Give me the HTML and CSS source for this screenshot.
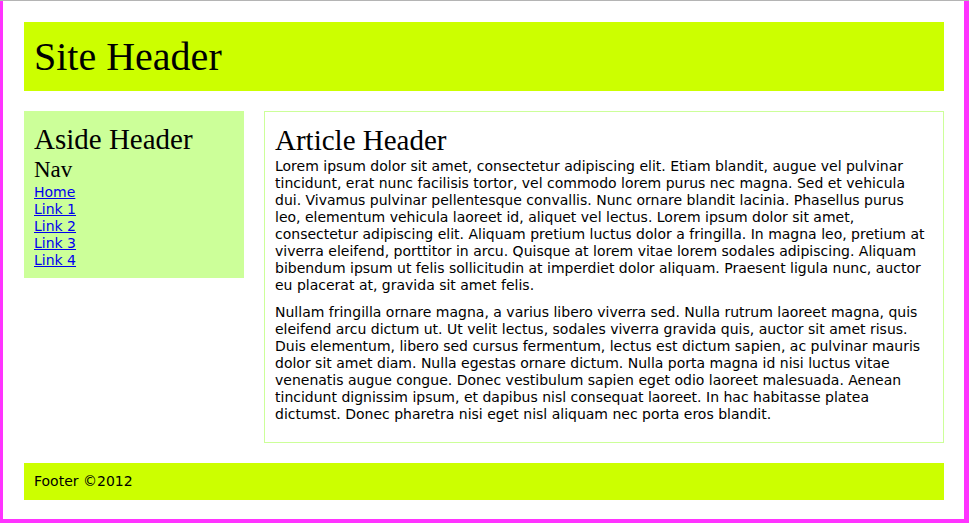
FILE: index.html
```html
<!DOCTYPE html>
<html>
<head>
<meta charset="utf-8">
<title>Layout</title>
<link rel="stylesheet" href="styles.css">
</head>
<body>
<div class="page">
  <header class="site-header">
    <h1>Site Header</h1>
  </header>
  <div class="main">
    <aside class="aside">
      <h2 class="aside-title">Aside Header</h2>
      <nav class="nav">
        <h3 class="nav-title">Nav</h3>
        <ul class="nav-list">
          <li><a href="#">Home</a></li>
          <li><a href="#">Link 1</a></li>
          <li><a href="#">Link 2</a></li>
          <li><a href="#">Link 3</a></li>
          <li><a href="#">Link 4</a></li>
        </ul>
      </nav>
    </aside>
    <article class="article">
      <h2 class="article-title">Article Header</h2>
      <p>Lorem ipsum dolor sit amet, consectetur adipiscing elit. Etiam blandit, augue vel pulvinar tincidunt, erat nunc facilisis tortor, vel commodo lorem purus nec magna. Sed et vehicula dui. Vivamus pulvinar pellentesque convallis. Nunc ornare blandit lacinia. Phasellus purus leo, elementum vehicula laoreet id, aliquet vel lectus. Lorem ipsum dolor sit amet, consectetur adipiscing elit. Aliquam pretium luctus dolor a fringilla. In magna leo, pretium at viverra eleifend, porttitor in arcu. Quisque at lorem vitae lorem sodales adipiscing. Aliquam bibendum ipsum ut felis sollicitudin at imperdiet dolor aliquam. Praesent ligula nunc, auctor eu placerat at, gravida sit amet felis.</p>
      <p>Nullam fringilla ornare magna, a varius libero viverra sed. Nulla rutrum laoreet magna, quis eleifend arcu dictum ut. Ut velit lectus, sodales viverra gravida quis, auctor sit amet risus. Duis elementum, libero sed cursus fermentum, lectus est dictum sapien, ac pulvinar mauris dolor sit amet diam. Nulla egestas ornare dictum. Nulla porta magna id nisi luctus vitae venenatis augue congue. Donec vestibulum sapien eget odio laoreet malesuada. Aenean tincidunt dignissim ipsum, et dapibus nisl consequat laoreet. In hac habitasse platea dictumst. Donec pharetra nisi eget nisl aliquam nec porta eros blandit.</p>
    </article>
  </div>
  <footer class="site-footer">Footer ©2012</footer>
</div>
</body>
</html>
```
FILE: styles.css
```css
html, body {
  margin: 0;
  padding: 0;
  background: #fff;
}
body {
  border-top: 1px solid #b4b4b4;
  font-family: "DejaVu Sans", Verdana, sans-serif;
  font-size: 14px;
  line-height: 17px;
  color: #000;
}
.page {
  height: 522px;
  box-sizing: border-box;
  border-left: 3px solid #ff33ff;
  border-right: 5px solid #ff33ff;
  border-bottom: 4px solid #ff33ff;
  padding: 21px 20px 19px 21px;
  display: flex;
  flex-direction: column;
  gap: 20px;
}
.site-header {
  background: #ccff00;
  padding: 10px;
}
.site-header h1 {
  margin: 0;
  font-family: "Liberation Serif", "Times New Roman", serif;
  font-weight: normal;
  font-size: 40px;
  line-height: 49px;
}
.main {
  display: flex;
  align-items: flex-start;
  gap: 20px;
}
.aside {
  width: 220px;
  box-sizing: border-box;
  flex: none;
  background: #ccff99;
  padding: 12px 10px 9px;
}
.aside-title, .article-title, .nav-title {
  margin: 0;
  font-family: "Liberation Serif", "Times New Roman", serif;
  font-weight: normal;
}
.aside-title {
  font-size: 29px;
  line-height: 33px;
}
.nav-title {
  font-size: 23px;
  line-height: 27px;
  margin-bottom: 1px;
}
.nav-list {
  list-style: none;
  margin: 0;
  padding: 0;
}
.nav-list a {
  color: #0000ee;
}
.article {
  flex: 1;
  border: 1px solid #ccff99;
  padding: 10px 10px 9px;
}
.article-title {
  font-size: 29px;
  line-height: 36px;
}
.article p {
  margin: 0 0 10px;
}
.site-footer {
  background: #ccff00;
  padding: 10px;
}
```
